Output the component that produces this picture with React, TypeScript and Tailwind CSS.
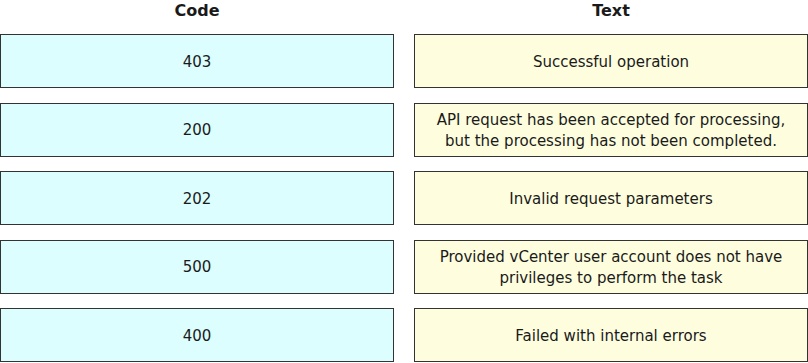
import React from 'react'

const rows = [
    { code: '403', text: ['Successful operation'] },
    { code: '200', text: ['API request has been accepted for processing,', 'but the processing has not been completed.'] },
    { code: '202', text: ['Invalid request parameters'] },
    { code: '500', text: ['Provided vCenter user account does not have', 'privileges to perform the task'] },
    { code: '400', text: ['Failed with internal errors'] },
]

const App = () => {
    return (
        <div className="h-[363px] w-[808px] bg-white font-['DejaVu_Sans',sans-serif] text-[#1a1a1a]">
            <div className="grid h-[34px] grid-cols-[394px_394px] gap-x-[20px]">
                <h1 className="pt-[1px] text-center text-[16px] font-bold leading-[20px]">Code</h1>
                <h1 className="pt-[1px] text-center text-[16px] font-bold leading-[20px]">Text</h1>
            </div>
            <div className="flex flex-col gap-[14.5px]">
                {rows.map((r) => (
                    <div key={r.code} className="grid h-[54px] grid-cols-[394px_394px] gap-x-[20px]">
                        <div className="flex items-center justify-center border border-[#333] bg-[#dcfeff] pt-[2px] text-[15px]">{r.code}</div>
                        <div className="flex flex-col items-center justify-center border border-[#333] bg-[#fefedf] pt-[2px] text-[15px] leading-[21px]">
                            {r.text.map((t) => (
                                <span key={t}>{t}</span>
                            ))}
                        </div>
                    </div>
                ))}
            </div>
        </div>
    )
}

export default App
